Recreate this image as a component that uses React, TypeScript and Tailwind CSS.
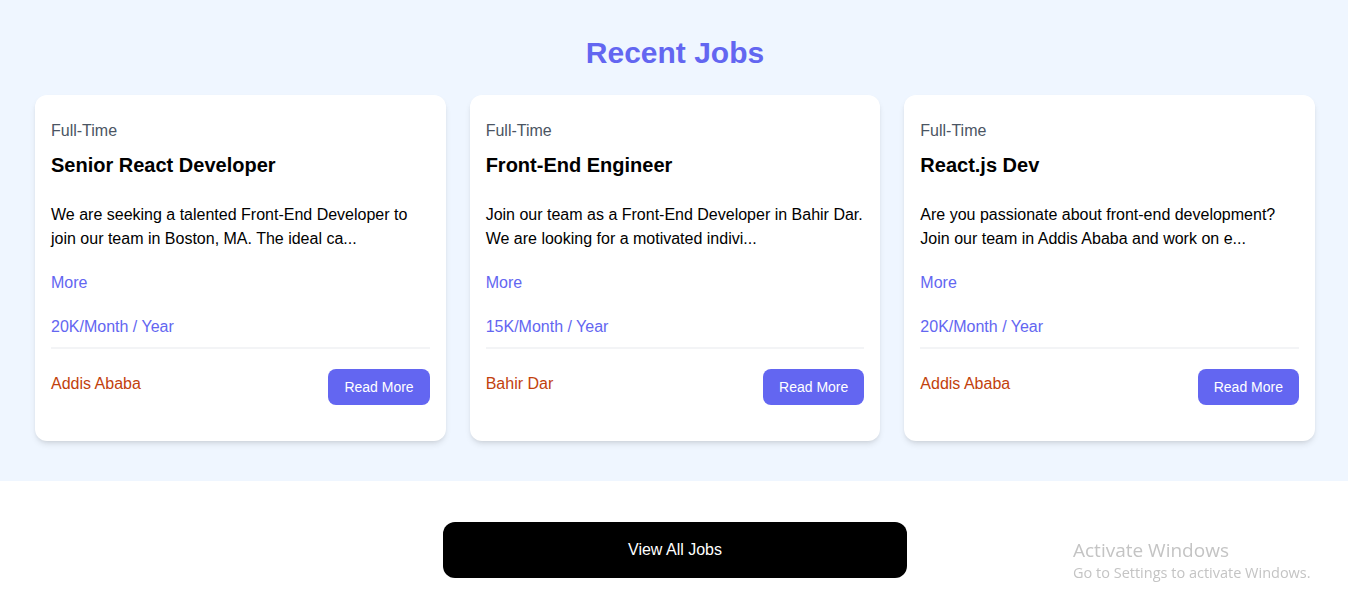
const jobs = [
  {
    id: 1,
    type: 'Full-Time',
    title: 'Senior React Developer',
    description:
      'We are seeking a talented Front-End Developer to join our team in Boston, MA. The ideal ca...',
    salary: '20K/Month',
    location: 'Addis Ababa',
  },
  {
    id: 2,
    type: 'Full-Time',
    title: 'Front-End Engineer',
    description:
      'Join our team as a Front-End Developer in Bahir Dar. We are looking for a motivated indivi...',
    salary: '15K/Month',
    location: 'Bahir Dar',
  },
  {
    id: 3,
    type: 'Full-Time',
    title: 'React.js Dev',
    description:
      'Are you passionate about front-end development? Join our team in Addis Ababa and work on e...',
    salary: '20K/Month',
    location: 'Addis Ababa',
  },
];

type Job = (typeof jobs)[number];

function JobListing({ job }: { job: Job }) {
  return (
    <div className="bg-white rounded-xl shadow-md relative">
      <div className="p-4">
        <div className="mb-6">
          <div className="text-[#4b5563] my-2">{job.type}</div>
          <h3 className="text-xl font-bold text-black">{job.title}</h3>
        </div>

        <div className="mb-5 text-black">{job.description}</div>

        <button className="block text-[#6366f1] mb-5 hover:text-[#4f46e5]">More</button>

        <h3 className="text-[#6366f1] mb-2">{job.salary} / Year</h3>

        <div className="border border-[#f3f4f6] mb-5"></div>

        <div className="flex flex-row justify-between mb-[17px]">
          <div className="text-[#c2410c] pt-[3px] mb-3">{job.location}</div>
          <a
            href="#"
            className="h-[36px] bg-[#6366f1] hover:bg-[#4f46e5] text-white px-4 py-2 rounded-lg text-center text-sm"
          >
            Read More
          </a>
        </div>
      </div>
    </div>
  );
}

export default function App() {
  return (
    <div className="relative bg-white font-['Liberation_Sans',Arial,sans-serif]">
      {/* 최근 채용 */}
      <section className="bg-[#eff6ff] pl-[17px] pr-[15px] pt-[35px] pb-10">
        <div className="max-w-7xl m-auto">
          <h2 className="text-3xl font-bold text-[#6366f1] mb-6 text-center">Recent Jobs</h2>
          <div className="grid grid-cols-3 gap-6">
            {jobs.map((job) => (
              <JobListing key={job.id} job={job} />
            ))}
          </div>
        </div>
      </section>

      {/* 전체 보기 */}
      <div className="pl-[2px]">
        <section className="m-auto max-w-lg mt-[41px] mb-10 px-6">
          <a
            href="#"
            className="block bg-black text-white text-center py-4 px-6 rounded-xl hover:bg-gray-700"
          >
            View All Jobs
          </a>
        </section>
      </div>

      {/* 워터마크 */}
      <div className="fixed left-[1073px] top-[538px] pointer-events-none font-['Open_Sans','Noto_Sans',sans-serif] text-[#c4c4c4]">
        <div className="text-[19px] leading-[24px]">Activate Windows</div>
        <div className="text-[14.5px] leading-[22px]">Go to Settings to activate Windows.</div>
      </div>
    </div>
  );
}
